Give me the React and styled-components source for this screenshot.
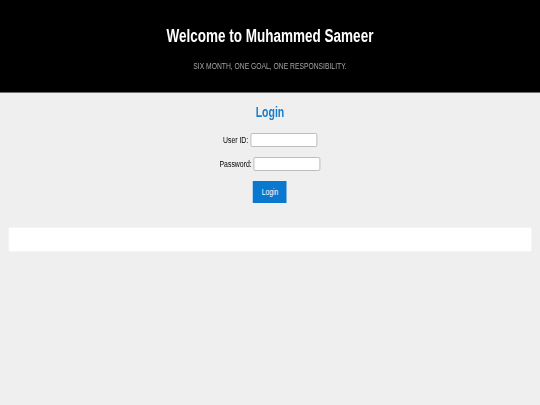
import React from "react";
import styled, { createGlobalStyle } from "styled-components";

const GlobalStyle = createGlobalStyle`
  html, body {
    margin: 0;
    padding: 0;
    background: #efefef;
    overflow-x: hidden;
    font-family: "Liberation Sans", Arial, Helvetica, sans-serif;
  }
`;

// the page is drawn in a narrow face: lay out 4/3 wider and squeeze it back
const Page = styled.div`
  width: 133.3333vw;
  transform: scaleX(0.75);
  transform-origin: 0 0;
`;

const Header = styled.header`
  background: #000;
  height: 93px;
  border-bottom: 1px solid #6f6f6f;
  display: flex;
  flex-direction: column;
  align-items: center;
  padding-top: 26px;
  box-sizing: border-box;
`;

const Title = styled.h1`
  margin: 0;
  color: #fff;
  font-size: 18px;
  line-height: 21px;
  font-weight: bold;
`;

const Tagline = styled.p`
  margin: 14px 0 0;
  color: #a6a6a6;
  font-size: 9px;
  line-height: 11px;
`;

const Main = styled.main`
  display: flex;
  flex-direction: column;
  align-items: center;
  padding-top: 11px;
`;

const Heading = styled.h2`
  margin: 0 0 12px;
  color: #1a7dcc;
  font-size: 14px;
  line-height: 17px;
  font-weight: bold;
`;

const Form = styled.form`
  display: flex;
  flex-direction: column;
  align-items: center;
  gap: 10px;
`;

const Row = styled.label`
  display: flex;
  align-items: center;
  gap: 2.67px;
  font-size: 9.2px;
  color: #000;
`;

const Field = styled.input`
  width: 89px;
  height: 14px;
  box-sizing: border-box;
  border: 1px solid #b5b5b5;
  border-radius: 2px;
  background: #fff;
  padding: 0 2px;
  font-size: 9px;
`;

const Button = styled.button`
  width: 45px;
  height: 22px;
  border: none;
  background: #0a78cf;
  color: #fff;
  font-family: inherit;
  font-size: 9px;
  cursor: pointer;
`;

const Panel = styled.div`
  margin: 24px 10.67px 0;
  height: 25px;
  box-sizing: border-box;
  background: #fff;
  border: 1px solid #f4f4f4;
  border-radius: 2px;
`;

export default function App() {
  return (
    <>
      <GlobalStyle />
      <Page>
        <Header>
          <Title>Welcome to Muhammed Sameer</Title>
          <Tagline>SIX MONTH, ONE GOAL, ONE RESPONSIBILITY.</Tagline>
        </Header>
        <Main>
          <Heading>Login</Heading>
          <Form onSubmit={(e) => e.preventDefault()}>
            <Row>
              User ID:
              <Field type="text" />
            </Row>
            <Row>
              Password:
              <Field type="password" />
            </Row>
            <Button type="submit">Login</Button>
          </Form>
        </Main>
        <Panel />
      </Page>
    </>
  );
}
